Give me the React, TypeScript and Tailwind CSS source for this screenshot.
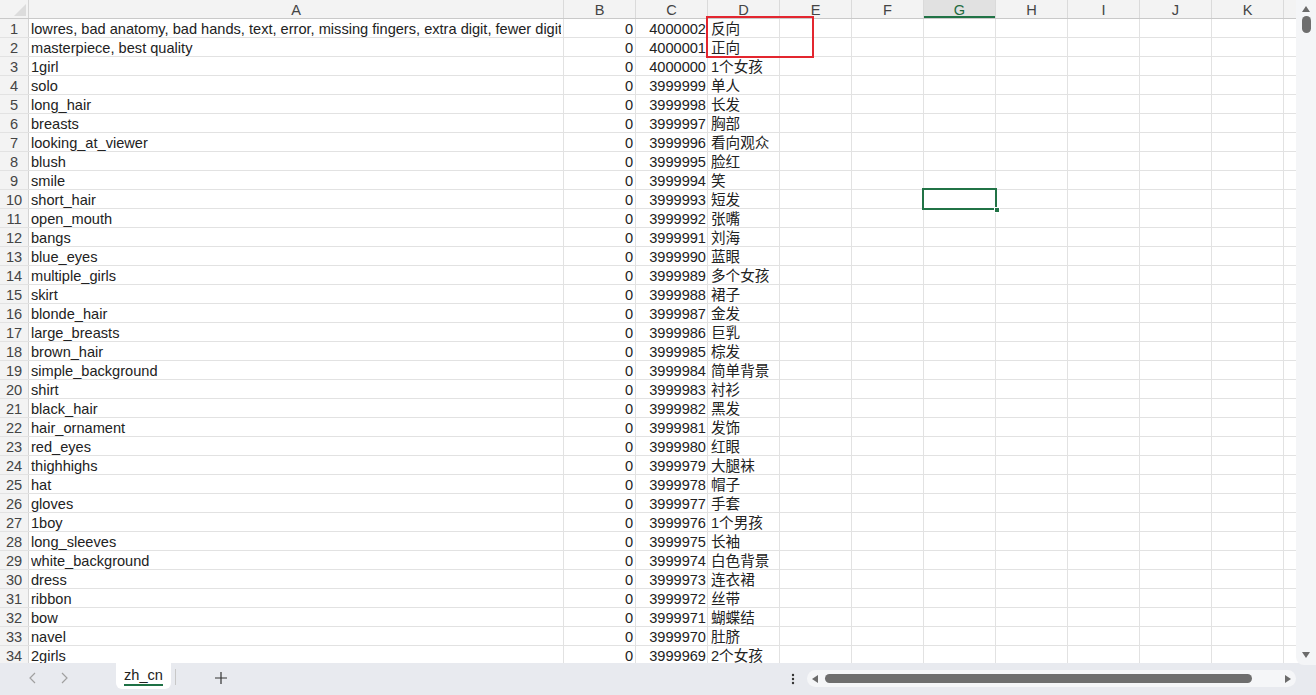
import React from "react";

const rows: [string, string, string][] = [
  ["lowres, bad anatomy, bad hands, text, error, missing fingers, extra digit, fewer digits, cropped, worst quality, low quality, normal quality, jpeg artifacts, signature, watermark, username, blurry", "4000002", "反向"],
  ["masterpiece, best quality", "4000001", "正向"],
  ["1girl", "4000000", "1个女孩"],
  ["solo", "3999999", "单人"],
  ["long_hair", "3999998", "长发"],
  ["breasts", "3999997", "胸部"],
  ["looking_at_viewer", "3999996", "看向观众"],
  ["blush", "3999995", "脸红"],
  ["smile", "3999994", "笑"],
  ["short_hair", "3999993", "短发"],
  ["open_mouth", "3999992", "张嘴"],
  ["bangs", "3999991", "刘海"],
  ["blue_eyes", "3999990", "蓝眼"],
  ["multiple_girls", "3999989", "多个女孩"],
  ["skirt", "3999988", "裙子"],
  ["blonde_hair", "3999987", "金发"],
  ["large_breasts", "3999986", "巨乳"],
  ["brown_hair", "3999985", "棕发"],
  ["simple_background", "3999984", "简单背景"],
  ["shirt", "3999983", "衬衫"],
  ["black_hair", "3999982", "黑发"],
  ["hair_ornament", "3999981", "发饰"],
  ["red_eyes", "3999980", "红眼"],
  ["thighhighs", "3999979", "大腿袜"],
  ["hat", "3999978", "帽子"],
  ["gloves", "3999977", "手套"],
  ["1boy", "3999976", "1个男孩"],
  ["long_sleeves", "3999975", "长袖"],
  ["white_background", "3999974", "白色背景"],
  ["dress", "3999973", "连衣裙"],
  ["ribbon", "3999972", "丝带"],
  ["bow", "3999971", "蝴蝶结"],
  ["navel", "3999970", "肚脐"],
  ["2girls", "3999969", "2个女孩"],
];

const extraCols = ["E", "F", "G", "H", "I", "J", "K"];

export default function App() {
  return (
    <div className="w-[1316px] h-[695px] flex flex-col bg-[#e8eaef] overflow-hidden font-['Liberation_Sans','Noto_Sans_CJK_SC',sans-serif] text-[14.6px] text-[#222]">
      <div className="flex h-[663px] bg-white">
        <div className="relative w-[1296px] h-[663px] overflow-hidden">
          {/* header row */}
          <div className="flex h-[19px] bg-[#f3f3f3] border-b border-[#c9c9c9] text-[#444] leading-[20px]">
            <div className="w-[29px] shrink-0 border-r border-[#d4d4d4] relative">
              <div className="absolute right-[2px] bottom-[2px] w-0 h-0 border-l-[12px] border-l-transparent border-b-[12px] border-b-[#dcdcdc]" />
            </div>
            <div className="w-[535px] shrink-0 border-r border-[#dadada] text-center">A</div>
            <div className="w-[72px] shrink-0 border-r border-[#dadada] text-center">B</div>
            <div className="w-[72px] shrink-0 border-r border-[#dadada] text-center">C</div>
            <div className="w-[72px] shrink-0 border-r border-[#dadada] text-center">D</div>
            {extraCols.map((c) => (
              <div
                key={c}
                className={
                  c === "G"
                    ? "w-[72px] shrink-0 border-r border-[#dadada] text-center bg-[#e1e1e1] text-[#1e6b40] shadow-[inset_0_-2px_0_#217346]"
                    : "w-[72px] shrink-0 border-r border-[#dadada] text-center"
                }
              >
                {c}
              </div>
            ))}
            <div className="w-[72px] shrink-0" />
          </div>
          {rows.map((r, i) => (
            <div key={i} className="flex h-[19px] border-b border-[#e2e2e2] leading-[20px] overflow-hidden">
              <div className="w-[29px] shrink-0 border-r border-[#d4d4d4] bg-[#f3f3f3] text-[#444] text-center">
                {i + 1}
              </div>
              <div className="w-[535px] shrink-0 border-r border-[#e2e2e2] pl-[2px] overflow-hidden">
                <span className="block whitespace-nowrap w-[530px] overflow-hidden text-clip">{r[0]}</span>
              </div>
              <div className="w-[72px] shrink-0 border-r border-[#e2e2e2] pr-[2px] text-right">0</div>
              <div className="w-[72px] shrink-0 border-r border-[#e2e2e2] pr-[1px] text-right">{r[1]}</div>
              <div className="w-[72px] shrink-0 border-r border-[#e2e2e2] pl-[3px] whitespace-nowrap overflow-hidden">{r[2]}</div>
              {extraCols.map((c) => (
                <div key={c} className="w-[72px] shrink-0 border-r border-[#e2e2e2]" />
              ))}
              <div className="w-[72px] shrink-0" />
            </div>
          ))}
          {/* red annotation box */}
          <div className="absolute left-[706px] top-[16px] w-[108px] h-[42px] border-2 border-[#e3262f]" />
          {/* selected cell */}
          <div className="absolute left-[922px] top-[188px] w-[75px] h-[22px] border-2 border-[#217346]">
            <div className="absolute right-[-5px] bottom-[-5px] w-[6px] h-[6px] bg-[#217346] border border-white" />
          </div>
        </div>
        {/* vertical scrollbar */}
        <div className="w-[20px] h-[665px] bg-[#f4f5f7] rounded-bl-[8px] flex flex-col items-center relative z-10">
          <svg width="10" height="8" viewBox="0 0 10 8" className="mt-[5px]">
            <path d="M5 1 L9 7 L1 7 Z" fill="#6b6b6b" />
          </svg>
          <div className="mt-[3px] w-[9px] h-[17px] rounded-full bg-[#6e6e6e]" />
          <div className="flex-1" />
          <svg width="10" height="8" viewBox="0 0 10 8" className="mb-[6px]">
            <path d="M1 1 L9 1 L5 7 Z" fill="#6b6b6b" />
          </svg>
        </div>
      </div>
      {/* bottom bar */}
      <div className="flex items-start h-[32px] text-[#333]">
        <div className="w-[116px] flex items-center h-[30px] pl-[26px] gap-[17px]">
          <svg width="14" height="14" viewBox="0 0 14 14">
            <path d="M9 2 L4 7 L9 12" fill="none" stroke="#a0a0a0" strokeWidth="1.2" />
          </svg>
          <svg width="14" height="14" viewBox="0 0 14 14">
            <path d="M5 2 L10 7 L5 12" fill="none" stroke="#a0a0a0" strokeWidth="1.2" />
          </svg>
        </div>
        <div className="w-[55px] h-[26px] bg-white rounded-b-[6px] flex flex-col items-center pt-[3px]">
          <span className="leading-[18px] text-[14.6px] text-[#222]">zh_cn</span>
          <div className="w-[39px] h-[2px] bg-[#1e7145]" />
        </div>
        <div className="ml-[4px] mt-[6px] w-px h-[16px] bg-[#c8c8c8]" />
        <div className="ml-[38px] h-[30px] flex items-center">
          <svg width="14" height="14" viewBox="0 0 14 14">
            <path d="M7 1 V13 M1 7 H13" stroke="#333" strokeWidth="1.2" />
          </svg>
        </div>
        <div className="ml-[563px] h-[32px] flex items-center">
          <svg width="4" height="14" viewBox="0 0 4 14">
            <circle cx="2" cy="3" r="1.2" fill="#333" />
            <circle cx="2" cy="7" r="1.2" fill="#333" />
            <circle cx="2" cy="11" r="1.2" fill="#333" />
          </svg>
        </div>
        <div className="ml-[12px] mt-[7px] w-[489px] h-[17px] rounded-full bg-[#f5f6f8] flex items-center px-[4px]">
          <svg width="8" height="10" viewBox="0 0 8 10">
            <path d="M7 1 L7 9 L1 5 Z" fill="#6b6b6b" />
          </svg>
          <div className="ml-[6px] w-[427px] h-[9px] rounded-full bg-[#6e6e6e]" />
          <div className="flex-1" />
          <svg width="8" height="10" viewBox="0 0 8 10">
            <path d="M1 1 L1 9 L7 5 Z" fill="#6b6b6b" />
          </svg>
        </div>
      </div>
    </div>
  );
}
